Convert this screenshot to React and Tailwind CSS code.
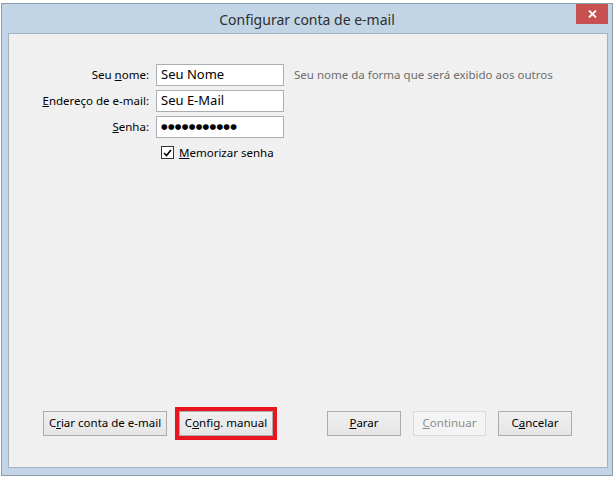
const font = { fontFamily: '"Noto Sans", "Open Sans", sans-serif' };

function Btn({ children, className = '', disabled = false }) {
  return (
    <button
      className={`h-[25px] border text-[11.5px] leading-none flex items-center justify-center pb-[2px] ${
        disabled
          ? 'border-[#d9d9d9] bg-[#f4f4f4] text-[#8d8d8d]'
          : 'border-[#acacac] bg-gradient-to-b from-[#f0f0f0] to-[#e5e5e5] text-black'
      } ${className}`}
    >
      {children}
    </button>
  );
}

export default function App() {
  return (
    <div className="w-[616px] h-[477px] bg-white pt-[3px] pl-[1px] overflow-hidden" style={font}>
      <div className="w-[612px] h-[473px] border border-[#8d9cab] bg-[#c1d5e6] flex flex-col">
        {/* Title bar */}
        <div className="h-[29px] relative flex items-center justify-center">
          <span className="text-[14px] text-[#2f2f2f] pt-[1px]">Configurar conta de e-mail</span>
          <div className="absolute right-[4px] top-0 w-[32px] h-[20px] bg-[#c75050] flex items-center justify-center">
            <svg width="9" height="8" viewBox="0 0 9 8">
              <path d="M1 0.5 L8 7.5 M8 0.5 L1 7.5" stroke="white" strokeWidth="1.8" />
            </svg>
          </div>
        </div>

        {/* Content */}
        <div className="flex-1 ml-[6px] mr-[4px] mb-[7px] border border-[#a3b0be] bg-[#f0f0f0] flex flex-col">
          <div className="pt-[30px] flex flex-col gap-[4px]">
            <div className="flex items-center h-[22px]">
              <label className="w-[140px] text-right text-[11.5px] text-black">
                Seu <u>n</u>ome:
              </label>
              <div className="ml-[7px] w-[128px] h-[22px] border border-[#abadb3] bg-white text-[13px] px-[4px] flex items-center">
                Seu Nome
              </div>
              <span className="ml-[10px] text-[11.5px] text-[#6d6d6d]">
                Seu nome da forma que será exibido aos outros
              </span>
            </div>
            <div className="flex items-center h-[22px]">
              <label className="w-[140px] text-right text-[11.5px] text-black">
                <u>E</u>ndereço de e-mail:
              </label>
              <div className="ml-[7px] w-[128px] h-[22px] border border-[#abadb3] bg-white text-[13px] px-[4px] flex items-center">
                Seu E-Mail
              </div>
            </div>
            <div className="flex items-center h-[22px]">
              <label className="w-[140px] text-right text-[11.5px] text-black">
                <u>S</u>enha:
              </label>
              <div className="ml-[7px] w-[128px] h-[22px] border border-[#abadb3] bg-white px-[4px] flex items-center">
                <span className="text-[7.6px] tracking-[0.3px] leading-none" style={{ fontFamily: '"DejaVu Sans", sans-serif' }}>
                  ●●●●●●●●●●●
                </span>
              </div>
            </div>
            <div className="flex items-center mt-[2px] ml-[152px]">
              <div className="w-[13px] h-[13px] border border-[#333] bg-white flex items-center justify-center">
                <svg width="9" height="8" viewBox="0 0 9 8">
                  <path d="M1 4 L3.5 6.5 L8 1" stroke="black" strokeWidth="1.6" fill="none" />
                </svg>
              </div>
              <span className="ml-[5px] text-[11.5px] text-black">
                <u>M</u>emorizar senha
              </span>
            </div>
          </div>

          <div className="mt-auto mb-[31px] flex items-center pl-[34px]">
            <Btn className="w-[124px]">
              <span>C<u>r</u>iar conta de e-mail</span>
            </Btn>
            <div className="ml-[12px] outline-[4px] outline outline-[#e8141f]">
              <Btn className="w-[94px]">
                <span>C<u>o</u>nfig. manual</span>
              </Btn>
            </div>
            <Btn className="w-[74px] ml-[54px]">
              <span><u>P</u>arar</span>
            </Btn>
            <Btn className="w-[73px] ml-[12px]" disabled>
              <span><u>C</u>ontinuar</span>
            </Btn>
            <Btn className="w-[74px] ml-[12px]">
              <span>C<u>a</u>ncelar</span>
            </Btn>
          </div>
        </div>
      </div>
    </div>
  );
}
